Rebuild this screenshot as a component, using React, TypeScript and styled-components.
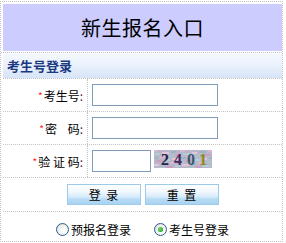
import React from 'react';
import styled, { createGlobalStyle } from 'styled-components';

const GlobalStyle = createGlobalStyle`
  body {
    margin: 0;
    background: #fff;
    color: #000;
    font-family: "Noto Sans CJK SC", "Liberation Sans", sans-serif;
    font-size: 12px;
  }
`;

const Page = styled.div`
  width: 285px;
  padding-top: 1px;
`;

const Frame = styled.div`
  width: 281px;
  border: 1px dotted #c4c4c4;
`;

const HeaderWrap = styled.div`
  padding: 2px 0 1px 2px;
  border-bottom: 1px dotted #c4c4c4;
`;

const Banner = styled.div`
  height: 47px;
  background: #ccccff;
  display: flex;
  align-items: center;
  justify-content: center;
  font-size: 20px;
  letter-spacing: 0.5px;
`;

const SectionBar = styled.div`
  margin-left: 2px;
  height: 25px;
  display: flex;
  align-items: center;
  padding-left: 4px;
  background: linear-gradient(to bottom, #f6f9fe 0%, #e9f1fc 50%, #d6e4f7 100%);
  border-bottom: 1px dotted #c4c4c4;
  color: #1c3a82;
  font-size: 13px;
  font-weight: bold;
`;

const Row = styled.div<{ $h: number; $last?: boolean }>`
  margin-left: 2px;
  height: ${(p) => p.$h}px;
  display: flex;
  align-items: stretch;
  border-bottom: ${(p) => (p.$last ? 'none' : '1px dotted #c4c4c4')};
`;

const LabelCell = styled.div`
  width: 80px;
  padding-right: 4px;
  border-right: 1px dotted #c4c4c4;
  display: flex;
  align-items: center;
  justify-content: flex-end;
  white-space: pre;
`;

const Star = styled.span`
  color: #ff2020;
  font-size: 10px;
  margin-right: 1px;
`;

const Colon = styled.span`
  color: #602040;
`;

const FieldCell = styled.div`
  flex: 1;
  padding-left: 4px;
  display: flex;
  align-items: center;
  gap: 3px;
`;

const CaptchaWrap = styled.div`
  display: flex;
  align-items: flex-start;
  gap: 3px;
`;

const TextBox = styled.input<{ $w: number }>`
  box-sizing: border-box;
  width: ${(p) => p.$w}px;
  height: 22px;
  margin: 0;
  padding: 1px 3px;
  border: 1px solid #7f9db9;
  background: #fff;
  outline: none;
`;

const CenterCell = styled.div<{ $gap: number }>`
  flex: 1;
  display: flex;
  align-items: center;
  justify-content: center;
  gap: ${(p) => p.$gap}px;
`;

const Btn = styled.button`
  box-sizing: border-box;
  width: 74px;
  height: 21px;
  margin: 0;
  padding: 0;
  border: 1px solid #9ccbea;
  background: linear-gradient(to bottom, #ffffff 0%, #f1f8fe 35%, #d9ecfa 60%, #b7dbf4 75%, #a9d3f1 100%);
  font-family: "Noto Sans CJK SC", sans-serif;
  font-size: 12px;
  color: #000;
  white-space: pre;
`;

const RadioItem = styled.label`
  display: flex;
  align-items: center;
  gap: 2px;
  font-size: 12px;
  margin-top: 5px;
`;

const RadioDot = styled.span<{ $on?: boolean }>`
  position: relative;
  box-sizing: border-box;
  width: 13px;
  height: 13px;
  border-radius: 50%;
  border: 1px solid #2a5b96;
  background: radial-gradient(circle at 60% 60%, #ffffff 0%, #f4f4f0 45%, #d4d4cc 100%);
  &::after {
    content: '';
    display: ${(p) => (p.$on ? 'block' : 'none')};
    position: absolute;
    left: 3px;
    top: 3px;
    width: 5px;
    height: 5px;
    border-radius: 50%;
    background: radial-gradient(circle at 40% 40%, #7ee07e 0%, #21a121 70%);
  }
`;

const captchaDots = Array.from({ length: 90 }, (_, i) => {
  const x = (i * 37) % 58;
  const y = (i * 53) % 18;
  const colors = ['#d8b8d0', '#a8c8c8', '#c8a0c0', '#b0d0d8', '#e0c8d8', '#98b8c0'];
  return { x, y, c: colors[i % colors.length] };
});

const Captcha = () => (
  <svg width="58" height="18" viewBox="0 0 58 18">
    <rect width="58" height="18" fill="#bcb6cc" />
    {captchaDots.map((d, i) => (
      <rect key={i} x={d.x} y={d.y} width="3" height="2" fill={d.c} />
    ))}
    <g fontFamily="Liberation Serif, serif" fontSize="16" fontWeight="bold">
      <text x="7" y="15" fill="#22264a">2</text>
      <text x="20" y="15" fill="#4a2a5e">4</text>
      <text x="33" y="15" fill="#345a6a">0</text>
      <text x="45" y="15" fill="#8a8a1a">1</text>
    </g>
  </svg>
);

export default function App() {
  return (
    <Page>
      <GlobalStyle />
      <Frame>
        <HeaderWrap>
          <Banner>新生报名入口</Banner>
        </HeaderWrap>
        <SectionBar>考生号登录</SectionBar>
        <Row $h={32}>
          <LabelCell>
            <Star>*</Star>考生号<Colon>:</Colon>
          </LabelCell>
          <FieldCell>
            <TextBox $w={126} type="text" />
          </FieldCell>
        </Row>
        <Row $h={32}>
          <LabelCell>
            <Star>*</Star>{'密    码'}<Colon>:</Colon>
          </LabelCell>
          <FieldCell>
            <TextBox $w={126} type="password" />
          </FieldCell>
        </Row>
        <Row $h={32}>
          <LabelCell>
            <Star>*</Star>{'验 证 码'}<Colon>:</Colon>
          </LabelCell>
          <FieldCell>
            <CaptchaWrap>
              <TextBox $w={59} type="text" />
              <Captcha />
            </CaptchaWrap>
          </FieldCell>
        </Row>
        <Row $h={33}>
          <CenterCell $gap={4}>
            <Btn type="button">{'登  录'}</Btn>
            <Btn type="button">{'重  置'}</Btn>
          </CenterCell>
        </Row>
        <Row $h={29} $last>
          <CenterCell $gap={23}>
            <RadioItem>
              <RadioDot />
              预报名登录
            </RadioItem>
            <RadioItem>
              <RadioDot $on />
              考生号登录
            </RadioItem>
          </CenterCell>
        </Row>
      </Frame>
    </Page>
  );
}
